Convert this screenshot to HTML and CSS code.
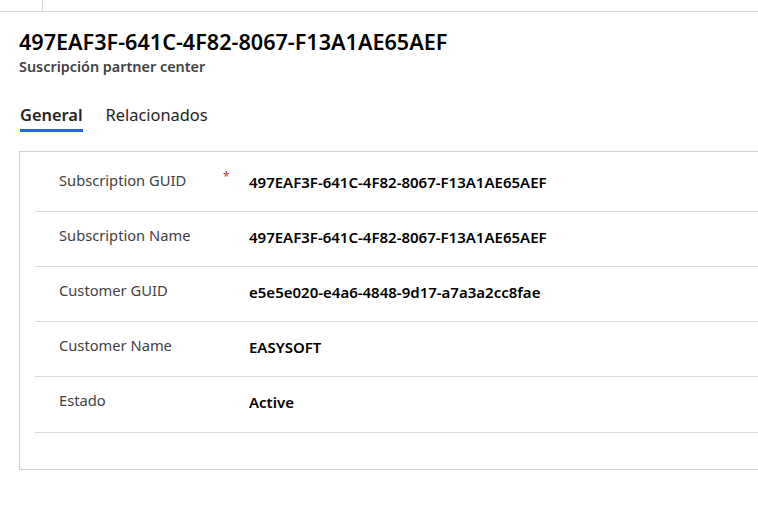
FILE: index.html
```html
<!DOCTYPE html>
<html lang="es">
<head>
<meta charset="utf-8">
<title>Suscripción partner center</title>
<link rel="stylesheet" href="styles.css">
</head>
<body>
<div class="topbar"><div class="topbar-cell"></div></div>
<header class="header">
  <h1 class="title">497EAF3F-641C-4F82-8067-F13A1AE65AEF</h1>
  <div class="subtitle">Suscripción partner center</div>
</header>
<nav class="tabs">
  <div class="tab tab-active">General</div>
  <div class="tab">Relacionados</div>
</nav>
<section class="card">
  <div class="row">
    <div class="label">Subscription GUID</div>
    <div class="req">*</div>
    <div class="value">497EAF3F-641C-4F82-8067-F13A1AE65AEF</div>
  </div>
  <div class="row">
    <div class="label">Subscription Name</div>
    <div class="req"></div>
    <div class="value">497EAF3F-641C-4F82-8067-F13A1AE65AEF</div>
  </div>
  <div class="row">
    <div class="label">Customer GUID</div>
    <div class="req"></div>
    <div class="value">e5e5e020-e4a6-4848-9d17-a7a3a2cc8fae</div>
  </div>
  <div class="row">
    <div class="label">Customer Name</div>
    <div class="req"></div>
    <div class="value">EASYSOFT</div>
  </div>
  <div class="row row-last">
    <div class="label">Estado</div>
    <div class="req"></div>
    <div class="value">Active</div>
  </div>
</section>
</body>
</html>
```
FILE: styles.css
```css
html, body {
  margin: 0;
  padding: 0;
  background: #ffffff;
  overflow: hidden;
}
body {
  font-family: "Noto Sans", "Open Sans", "Liberation Sans", sans-serif;
  color: #242424;
  width: 758px;
}
.topbar {
  height: 11px;
  border-bottom: 1px solid #d6d6d6;
}
.topbar-cell {
  width: 42px;
  height: 11px;
  border-right: 1px solid #d6d6d6;
}
.header {
  padding: 15px 0 0 19px;
}
.title {
  margin: 0;
  font-size: 21.6px;
  line-height: 30px;
  font-weight: 600;
  color: #000;
}
.subtitle {
  font-size: 14.4px;
  line-height: 19px;
  font-weight: 600;
  color: #424242;
}
.tabs {
  display: flex;
  gap: 23px;
  padding: 28px 0 0 20px;
}
.tab {
  font-size: 16.4px;
  line-height: 22px;
  padding-bottom: 6px;
  color: #242424;
}
.tab-active {
  font-weight: 600;
  border-bottom: 3px solid #2266e3;
  padding-bottom: 3px;
}
.card {
  margin: 19px 0 0 19px;
  width: 780px;
  border: 1px solid #d1d1d1;
  padding: 5px 0 36px 15px;
}
.row {
  display: flex;
  align-items: flex-start;
  height: 54px;
  padding-left: 24px;
  border-bottom: 1px solid #dadada;
  box-sizing: content-box;
}
.row-last {
  height: 55px;
}
.label {
  width: 164px;
  padding-top: 13px;
  font-size: 14.7px;
  line-height: 20px;
  color: #424242;
}
.req {
  width: 26px;
  padding-top: 12px;
  font-size: 12px;
  line-height: 16px;
  color: #d13438;
}
.value {
  padding-top: 15px;
  font-size: 15px;
  line-height: 20px;
  font-weight: 600;
  color: #000;
}
```
